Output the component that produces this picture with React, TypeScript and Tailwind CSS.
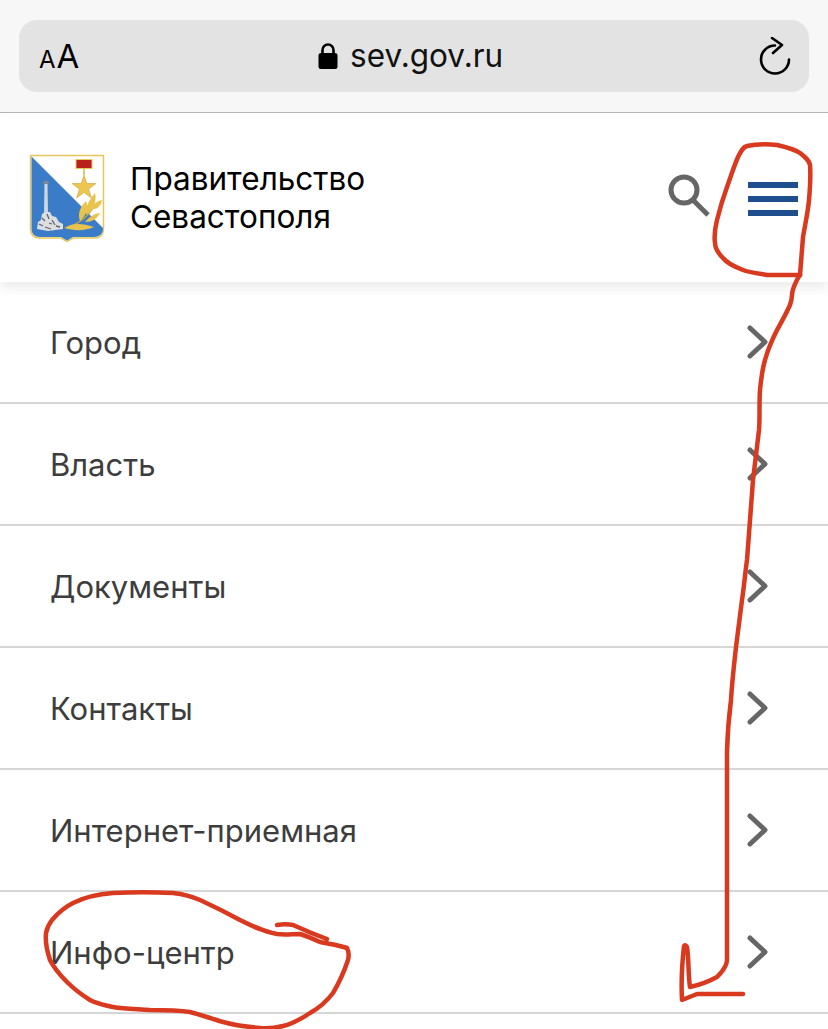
const menuItems = ['Город', 'Власть', 'Документы', 'Контакты', 'Интернет-приемная', 'Инфо-центр'];

function Crest() {
  return (
    <svg width="78" height="90" viewBox="0 0 78 90" className="shrink-0">
      <path d="M2.5 2.5H75.5V76C75.5 82 72 85 66 85H45L39 88.5L33 85H12C6 85 2.5 82 2.5 76Z" fill="#ffffff" stroke="#e6c65a" strokeWidth="1.5" />
      <path d="M3.5 3.5L75 75V76C75 81 71 84 66 84H45L39 87.5L33 84H12C7 84 3.5 81 3.5 76Z" fill="#3a7cc8" />
      {/* memorial */}
      <path d="M16.5 31H19.5L20 60H16Z" fill="#cfd6dc" />
      <path d="M15.5 28H20.5V31H15.5Z" fill="#7d8a94" />
      <path d="M9 76L10 69L13 67L14 61L17 59H22L24 63L28 64L31 69L35 71L35 76L20 78Z" fill="#dcdfe2" />
      <path d="M11 71L15 73M14 65L17 68M19 61L21 66M24 67L27 72M17 74L23 76M28 73L32 74M21 70L24 71" stroke="#5f666c" strokeWidth="1.3" />
      {/* medal */}
      <rect x="48" y="6.5" width="16" height="9" fill="#b9201d" stroke="#e8c95c" strokeWidth="1" />
      <path d="M56 15.5V22" stroke="#d9b548" strokeWidth="1.5" />
      <path d="M56 22L58.8 30.5H68L60.6 36L63.4 45L56 39.5L48.6 45L51.4 36L44 30.5H53.2Z" fill="#ecc64f" stroke="#c9a438" strokeWidth="0.6" />
      {/* laurel */}
      <path d="M37 75C48 72 59 66 66 53" stroke="#c9a438" strokeWidth="1.4" fill="none" />
      <path d="M37 75C43 70 54 70 66 74C57 78 46 78 37 75Z" fill="#e8c44e" />
      <path d="M52 68C49 60 53 53 58 48C61 55 58 63 52 68Z" fill="#e8c44e" />
      <path d="M58 62C57 53 62 46 67 40C69 48 66 56 58 62Z" fill="#e8c44e" />
      <path d="M63 56C65 51 69 48 74 47C73 53 69 57 63 56Z" fill="#e8c44e" />
      <path d="M57 69C61 64 67 60 72 60C69 66 64 69 57 69Z" fill="#e8c44e" />
    </svg>
  );
}

function Chevron() {
  return (
    <svg width="22" height="34" viewBox="0 0 22 34" className="shrink-0">
      <path d="M3 3L18 17L3 31" fill="none" stroke="#666666" strokeWidth="5" strokeLinecap="round" strokeLinejoin="round" />
    </svg>
  );
}

function Annotations() {
  return (
    <svg width="828" height="1029" viewBox="0 0 828 1029" className="absolute left-0 top-0 pointer-events-none">
      <g fill="none" stroke="#d8391f" strokeWidth="4.5" strokeLinecap="round" strokeLinejoin="round">
        <path d="M800 275L767 275C755 273 748 272 743 270C735 267 727 263 723 258C718 253 715 249 715 243C714 236 715 228 717 220C720 208 723 198 727 187C731 176 734 166 738 157C741 151 743 147 747 146C757 144 767 144 777 145C786 147 794 149 800 153C805 157 809 160 810 165C811 177 810 188 809 200C808 212 805 225 803 237C802 250 801 263 800 275Z" />
        <path d="M800 275L798 278C795 284 792 289 792 295C792 299 791 302 790 305C786 314 782 321 777 330C772 340 768 349 765 360C762 370 761 380 760 390C759 404 760 417 759 430C757 447 755 463 753 480C751 507 749 533 747 560C745 574 744 587 742 600C740 616 738 631 736 647C734 665 732 682 731 700C729 716 727.5 732 727 752C727 790 727 825 727 860C727 893 727 927 727 960C727 964 725 967 723 970C721 973 719 975 717 977C708 982 699 985 690 987C688 974 689 960 687 947C686 945 685 945 684 946C682 964 681 982 682 1000C687 998 692 996 697 994C712 994 728 994 743 994" />
        <path d="M277 925C283 924 288 924 293 925C304 930 316 935 327 939M347 948C349 952 349 956 348 960C344 972 339 983 333 993C327 1001 319 1008 310 1013C301 1019 292 1024 283 1026C275 1028 268 1029 260 1028C249 1027 238 1026 227 1023C215 1020 202 1015 190 1012C177 1010 163 1010 150 1010C137 1009 125 1009 113 1007C105 1005 97 1004 90 1000C82 995 74 989 67 982C60 975 54 968 50 960C47 951 45 942 46 933C47 928 49 924 52 920C58 913 65 907 73 903C85 897 99 894 113 893C133 892 153 892 173 893C182 894 191 896 200 900C213 906 227 913 240 920C252 926 264 932 277 934C285 935 292 934 300 934C307 936 313 939 320 942C329 944 338 945 347 948Z" />
      </g>
    </svg>
  );
}

export default function App() {
  return (
    <div className="relative w-[828px] h-[1029px] overflow-hidden bg-white font-['Inter',sans-serif]">
      <div className="h-[113px] bg-[#f7f7f7] border-b border-[#b5b5b5] px-[19px] pt-5">
        <div className="h-[72px] rounded-[18px] bg-[#e3e3e3] flex items-center pl-[20px] pr-[15px]">
          <div className="w-[279px] flex items-baseline gap-[1px] text-black leading-none">
            <span className="text-[24px]">A</span>
            <span className="text-[33px]">A</span>
          </div>
          <div className="flex-1 flex items-center gap-[12px]">
            <svg width="20" height="28" viewBox="0 0 20 28">
              <path d="M4.5 12V8a5.5 5.5 0 0 1 11 0V12" fill="none" stroke="#000" strokeWidth="2.6" />
              <rect x="0.5" y="11" width="19" height="16" rx="2.5" fill="#000" />
            </svg>
            <span className="text-[31.5px] leading-none text-[#111111]">sev.gov.ru</span>
          </div>
          <svg width="36" height="42" viewBox="0 0 36 42" className="mt-[3px]">
            <path d="M17 8.5A14 14 0 1 0 31 22.5" fill="none" stroke="#000" strokeWidth="2.6" strokeLinecap="round" />
            <path d="M14 1L24 8L15 16" fill="none" stroke="#000" strokeWidth="2.6" strokeLinecap="round" strokeLinejoin="round" />
          </svg>
        </div>
      </div>

      <header className="relative h-[169px] bg-white flex items-center pl-[28px] pr-[30px] shadow-[0_6px_10px_rgba(40,50,70,0.09)]">
        <Crest />
        <div className="ml-[24px] flex-1 text-[31.5px] leading-[38px] text-black">
          <div>Правительство</div>
          <div>Севастополя</div>
        </div>
        <svg width="44" height="44" viewBox="0 0 44 44" className="mr-[37px] mt-[-4px]">
          <circle cx="17" cy="16" r="13" fill="none" stroke="#666666" strokeWidth="5" />
          <path d="M26 26L41 41" stroke="#666666" strokeWidth="5" />
        </svg>
        <div className="flex flex-col gap-2 w-[50px] mt-[3px]">
          <div className="h-[6px] bg-[#1f4e8f]" />
          <div className="h-[6px] bg-[#1f4e8f]" />
          <div className="h-[6px] bg-[#1f4e8f]" />
        </div>
      </header>

      <ul>
        {menuItems.map((item) => (
          <li key={item} className="h-[122px] border-b-2 border-[#d6d6d6] flex items-center justify-between pl-[50px] pr-[59px]">
            <span className="text-[31px] pt-[2px] text-[#3d3d3d]">{item}</span>
            <Chevron />
          </li>
        ))}
      </ul>

      <Annotations />
    </div>
  );
}
